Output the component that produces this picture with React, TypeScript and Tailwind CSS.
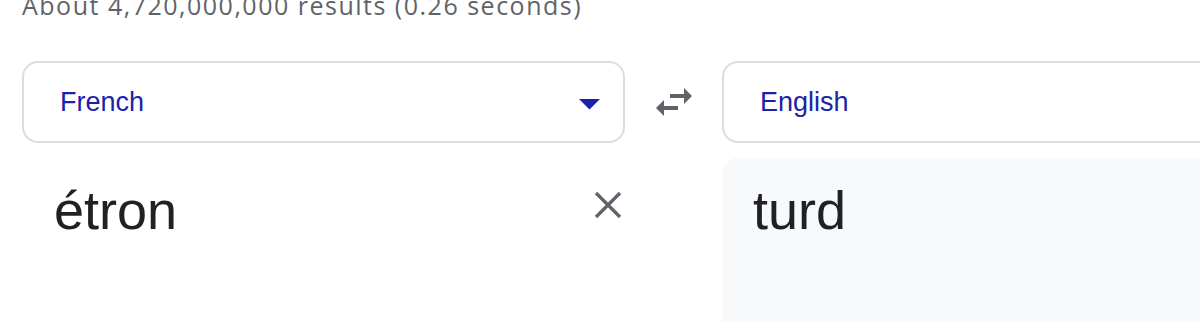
import React from "react";

const SwapIcon = () => (
  <svg width="48" height="48" viewBox="0 0 24 24" fill="#5f6368">
    <path d="M6.99 11L3 15l3.99 4v-3H14v-2H6.99v-3zM21 9l-3.99-4v3H10v2h7.01v3L21 9z" />
  </svg>
);

const DropArrow = () => (
  <svg width="21" height="11" viewBox="0 0 21 11" fill="#1a23a8">
    <polygon points="0,0 21,0 10.5,10.5" />
  </svg>
);

const ClearIcon = () => (
  <svg width="28" height="28" viewBox="5 5 14 14" stroke="#5f6368" strokeWidth="1.6" fill="none">
    <path d="M6 6l12 12M18 6L6 18" />
  </svg>
);

const App: React.FC = () => {
  return (
    <div className="h-[322px] w-[1200px] overflow-hidden bg-white font-['Liberation_Sans',Arial,sans-serif]">
      <div className="flex flex-col pl-[22px]">
        {/* results count, clipped by the top edge */}
        <div className="-mt-[9px] h-[28px] whitespace-nowrap font-['Open_Sans',sans-serif] text-[25px] leading-[28px] tracking-[1.5px] text-[#5f6368]">
          About 4,720,000,000 results (0.26 seconds)
        </div>

        {/* language pickers */}
        <div className="mt-[42px] flex items-center">
          <div className="flex h-[82px] w-[603px] shrink-0 items-center justify-between rounded-[16px] border-2 border-[#dadce0] pl-[36px] pr-[23px]">
            <span className="text-[27px] text-[#1a23a8]">French</span>
            <span className="mt-[4px] flex">
              <DropArrow />
            </span>
          </div>
          <div className="flex w-[97px] shrink-0 justify-center">
            <SwapIcon />
          </div>
          <div className="flex h-[82px] w-[603px] shrink-0 items-center rounded-[16px] border-2 border-[#dadce0] pl-[36px]">
            <span className="text-[27px] text-[#1a23a8]">English</span>
          </div>
        </div>

        {/* source / target text */}
        <div className="mt-[15px] flex">
          <div className="flex w-[603px] shrink-0 items-start justify-between pl-[32px] pr-[3px] pt-[20px]">
            <span className="text-[54px] leading-[64px] text-[#202124]">étron</span>
            <span className="mt-[13px] flex">
              <ClearIcon />
            </span>
          </div>
          <div className="w-[97px] shrink-0" />
          <div className="h-[200px] w-[603px] shrink-0 rounded-tl-[16px] bg-[#f8f9fa] pl-[31px] pt-[20px]">
            <span className="text-[54px] leading-[64px] text-[#202124]">turd</span>
          </div>
        </div>
      </div>
    </div>
  );
};

export default App;
